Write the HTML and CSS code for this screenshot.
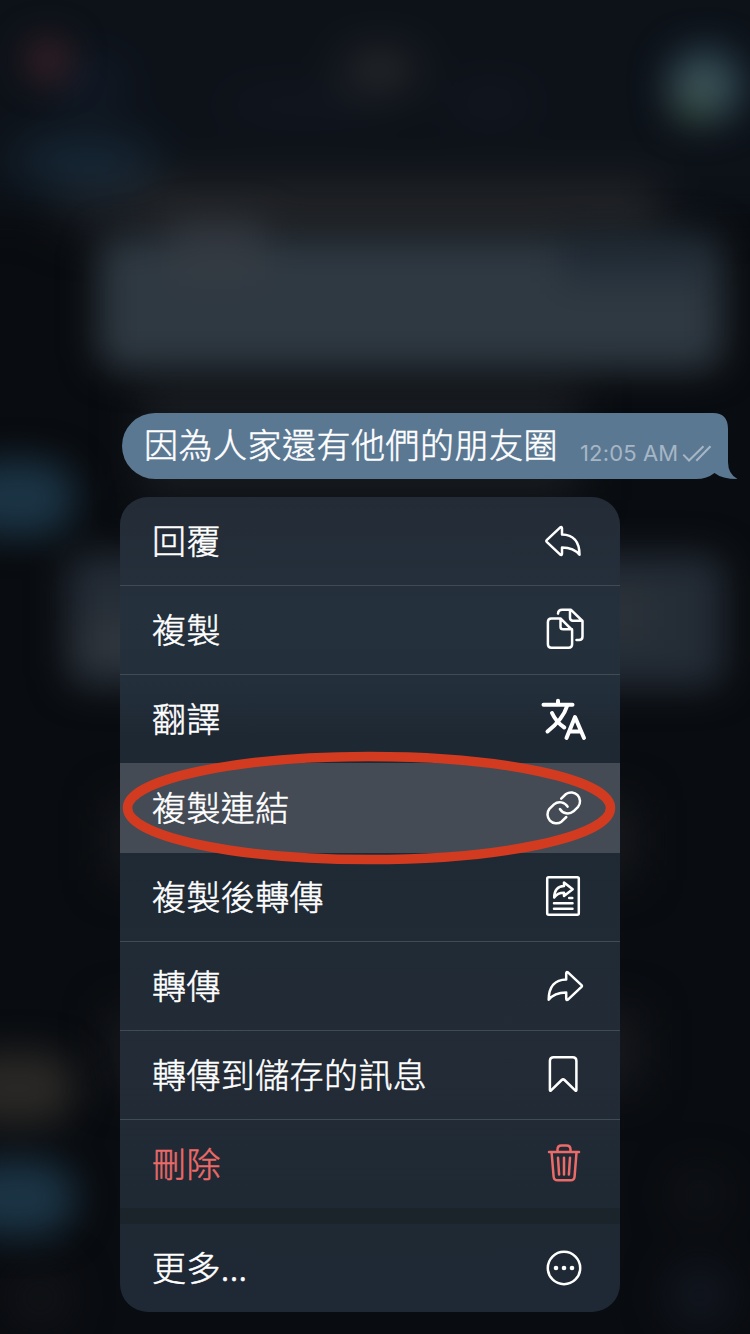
FILE: index.html
```html
<!DOCTYPE html>
<html lang="zh-Hant">
<head>
<meta charset="utf-8">
<title>訊息選單</title>
<link rel="stylesheet" href="styles.css">
</head>
<body>
<div class="screen">
  <svg class="backdrop" viewBox="0 0 750 1334" aria-hidden="true">
    <defs>
      <filter id="soft" x="-100%" y="-100%" width="300%" height="300%" color-interpolation-filters="sRGB"><feGaussianBlur stdDeviation="18"/></filter>
      <filter id="softer" x="-100%" y="-100%" width="300%" height="300%" color-interpolation-filters="sRGB"><feGaussianBlur stdDeviation="22"/></filter>
    </defs>
    <rect width="750" height="1334" fill="#090c10"/>
    <g filter="url(#softer)">
      <rect x="-80" y="-80" width="910" height="292" fill="#0d1219"/>
      <rect x="120" y="180" width="540" height="60" fill="#212326"/>
      <rect x="60" y="170" width="80" height="60" fill="#1b1e24"/>
      <rect x="140" y="380" width="440" height="120" fill="#181b1f"/>
      <rect x="110" y="800" width="525" height="80" fill="#17191d"/>
      <rect x="110" y="1010" width="530" height="80" fill="#17191d"/>
      <ellipse cx="85" cy="162" rx="72" ry="26" fill="#152736"/>
      <ellipse cx="90" cy="85" rx="34" ry="24" fill="#121b29"/>
      <ellipse cx="380" cy="70" rx="38" ry="20" fill="#292a2c"/>
      <ellipse cx="300" cy="105" rx="80" ry="10" fill="#151823"/>
      <ellipse cx="490" cy="103" rx="40" ry="14" fill="#151823"/>
      <circle cx="700" cy="1295" r="32" fill="#131721"/>
      <circle cx="700" cy="1195" r="24" fill="#121418"/>
      <circle cx="40" cy="1298" r="28" fill="#131419"/>
    </g>
    <g filter="url(#soft)">
      <rect x="98" y="236" width="625" height="134" rx="20" fill="#2f3942"/>
      <rect x="170" y="220" width="95" height="60" fill="#343a42"/>
      <rect x="560" y="232" width="150" height="50" fill="#232d37"/>
      <rect x="66" y="554" width="659" height="134" rx="20" fill="#242c36"/>
      <rect x="80" y="620" width="80" height="46" fill="#30363c"/>
      <rect x="600" y="590" width="50" height="50" fill="#2c3339"/>
      <circle cx="48" cy="60" r="20" fill="#43232a"/>
      <circle cx="705" cy="86" r="38" fill="#2e4755"/>
      <circle cx="700" cy="92" r="22" fill="#425654"/>
      <ellipse cx="694" cy="112" rx="22" ry="12" fill="#314940"/>
      <rect x="-40" y="460" width="115" height="76" rx="36" fill="#1b3445"/>
      <rect x="-40" y="1052" width="115" height="72" rx="34" fill="#2a2826"/>
      <rect x="-40" y="1160" width="115" height="76" rx="36" fill="#1b3445"/>
    </g>
  </svg>

  <main class="content">
    <div class="bubble">
      <svg class="bubble-shape" viewBox="0 0 616 66" aria-hidden="true"><path d="M33 0H591Q606 0 606 16V49Q606 61 615.500 66Q600 66 592.500 60Q585 66 574 66H33A33 33 0 0 1 33 0Z"/></svg>
      <span class="message">因為人家還有他們的朋友圈</span>
      <span class="time">12:05 AM</span>
      <svg class="checks" viewBox="0 0 30 18" aria-hidden="true"><path d="M1.300 9.600L7 15.500L21.500 1.200M14.300 15.800L28.500 1.200"/></svg>
    </div>

    <nav class="menu">
      <div class="item"><span>回覆</span><svg class="icon" viewBox="0 0 48 48"><path d="M6.700 23.100L20 10.600Q22 9.200 22 11.600V17.400C33 17.600 39.500 24.500 39.500 37.800C35.500 32.500 30 30.400 22 30.400V36.400Q22 38.800 20 37.400L6.700 24.900Q5.800 24 6.700 23.100Z"/></svg></div>
      <div class="item"><span>複製</span><svg class="icon" viewBox="0 0 48 48"><path d="M11.400 12.400H20.500L32.100 24V38.300Q32.100 41.800 28.600 41.800H11.400Q7.900 41.800 7.900 38.300V15.900Q7.900 12.400 11.400 12.400ZM20.500 12.400V20.700Q20.500 23.300 23.100 23.300H32M18 7.600Q18.200 3.700 22.300 3.700H30.800L42.500 15V30.500Q42.500 34 39 34H36.500M30 4V11.800Q30 14.700 32.900 14.700H42"/></svg></div>
      <div class="item"><span>翻譯</span><svg class="icon bold" viewBox="0 0 48 48"><path d="M3.500 9.700H32.500M18 5.800V9.500M27.300 10.500C24 21 17 29 7.500 36.500M12 18C15 24.500 19 29 24.300 32.500M26.500 43L35 22L44 43M29.500 36.500H41.300"/></svg></div>
      <div class="item active"><span>複製連結</span><svg class="icon" viewBox="0 0 48 48"><path d="M21.200 14.700L26 10A8.900 8.900 0 0 1 38.100 22.800L33.500 27.300A9 9 0 0 1 19.900 25M26.300 33L21.500 37.700A8.900 8.900 0 0 1 9.400 24.900L14 20.400A9 9 0 0 1 27.600 22.700"/></svg></div>
      <div class="item"><span>複製後轉傳</span><svg class="icon" viewBox="0 0 48 48"><rect x="7.200" y="4.200" width="31.600" height="37.600" rx="1.500"/><path d="M14 30.300H32.500M14 35.700H32.500M29.200 25H32.300M32.700 16.300L24 9.600V13C17.500 13.400 14.300 17 14.200 24.500C16.500 21 19.500 19.700 24 19.700V23Z"/></svg></div>
      <div class="item"><span>轉傳</span><svg class="icon" viewBox="0 0 48 48"><path d="M41.500 23.100L28.200 10.600Q26.200 9.200 26.200 11.600V17.400C15.200 17.600 8.700 24.500 8.700 37.800C12.700 32.500 18.200 30.400 26.200 30.400V36.400Q26.200 38.800 28.200 37.400L41.500 24.900Q42.400 24 41.500 23.100Z"/></svg></div>
      <div class="item"><span>轉傳到儲存的訊息</span><svg class="icon" viewBox="0 0 48 48"><path d="M13.800 6.200H32.600Q36.400 6.200 36.400 10V39Q36.400 40.500 35.200 39.300L24.500 29Q23.100 27.600 21.700 29L11.100 39.300Q9.900 40.500 9.900 39V10Q9.900 6.200 13.800 6.200Z"/></svg></div>
      <div class="item danger"><span>刪除</span><svg class="icon" viewBox="0 0 48 48"><path d="M9 12H39M17.500 12V9.500Q17.500 5.500 21.500 5.500H26.500Q30.500 5.500 30.500 9.500V12M11.600 12.500L13.600 36.500Q13.900 40.300 17.700 40.300H30.500Q34.300 40.300 34.600 36.500L36.500 12.500M18 17.700L19.100 34.500M24 17.700V34.500M30 17.700L28.900 34.500"/></svg></div>
      <div class="gap"></div>
      <div class="item"><span>更多...</span><svg class="icon" viewBox="0 0 48 48"><circle cx="24" cy="24" r="16.200"/><g class="dots"><circle cx="16" cy="24" r="2.300"/><circle cx="24" cy="24" r="2.300"/><circle cx="32" cy="24" r="2.300"/></g></svg></div>
      <svg class="marker" viewBox="0 0 500 120" aria-hidden="true"><ellipse cx="249" cy="61" rx="241.500" ry="51.600"/></svg>
    </nav>
  </main>
</div>
</body>
</html>
```
FILE: styles.css
```css
body { margin: 0; background: #090c10; }

.screen {
  position: relative;
  width: 750px;
  height: 1334px;
  overflow: hidden;
  font-family: "Noto Sans CJK TC", sans-serif;
  color: #fff;
}

.backdrop { position: absolute; inset: 0; width: 750px; height: 1334px; }

.content {
  position: relative;
  display: flex;
  flex-direction: column;
  gap: 18px;
  padding: 413px 0 0 120px;
}

.bubble {
  position: relative;
  display: flex;
  box-sizing: border-box;
  width: 606px;
  height: 66px;
  margin-left: 2px;
  padding-left: 22px;
}

.bubble-shape { position: absolute; top: 0; left: 0; width: 616px; height: 66px; fill: #5b7893; }

.message {
  position: relative;
  width: 436px;
  font-size: 34px;
  font-weight: 300;
  line-height: 62px;
  letter-spacing: 0.5px;
  -webkit-text-stroke: 0.5px currentColor;
  white-space: nowrap;
}

.time {
  position: relative;
  width: 104px;
  padding-top: 25px;
  font: 400 22px/30px Inter, sans-serif;
  letter-spacing: 0.15px;
  color: #a6b6c5;
  white-space: nowrap;
}

.checks {
  position: relative;
  width: 30px;
  height: 18px;
  margin: 32px 0 0 -2px;
  fill: none;
  stroke: #a6b6c5;
  stroke-width: 2;
}

.menu {
  position: relative;
  width: 500px;
  height: 815px;
  border-radius: 28px;
  background: linear-gradient(#232b36 0, #24303c 110px, #23303c 180px, #1e2833 240px, #202a35 400px, #222b36 580px, #1f2934 700px, #1f2935 100%);
}

.item {
  display: flex;
  align-items: center;
  justify-content: space-between;
  box-sizing: border-box;
  height: 89px;
  padding: 0 32px;
  border-bottom: 1px solid #414b56;
  font-size: 34px;
  font-weight: 300;
  line-height: 50px;
  letter-spacing: 0.4px;
  -webkit-text-stroke: 0.5px currentColor;
}

.item span { padding-bottom: 2px; }
.item:nth-child(3) { border-bottom-color: #444b55; }
.item.active { background: #444b55; border-bottom-color: #444b55; }
.item.danger { color: #ec6b69; }
.item.danger, .gap + .item { height: 88px; border-bottom: 0; }

.gap { height: 16px; background: #1b232b; }

.icon {
  width: 48px;
  height: 48px;
  fill: none;
  stroke: currentColor;
  stroke-width: 2.5;
  stroke-linecap: round;
  stroke-linejoin: round;
}

.icon.bold { stroke-width: 4; }
.dots { fill: currentColor; stroke: none; }

.marker {
  position: absolute;
  top: 250px;
  left: 0;
  width: 500px;
  height: 120px;
  fill: none;
  stroke: #d33b20;
  stroke-width: 9.5;
}
```
